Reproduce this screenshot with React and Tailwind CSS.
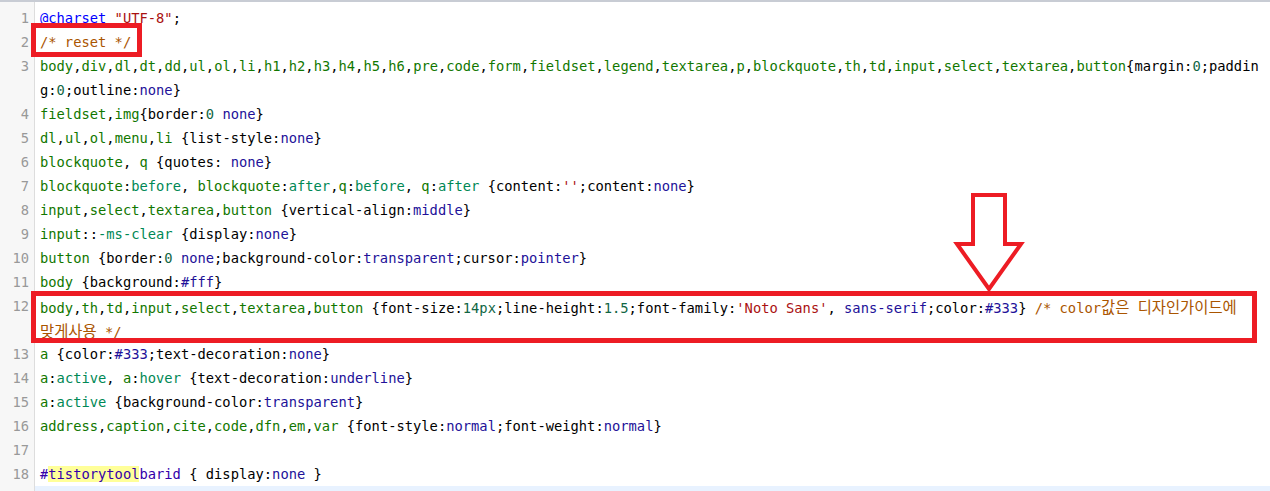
import React from 'react';

const tone = {
  p: 'text-black',
  t: 'text-[#117700]',
  a: 'text-[#221199]',
  n: 'text-[#116644]',
  s: 'text-[#aa1111]',
  c: 'text-[#aa5500]',
  v: 'text-[#008855]',
  d: 'text-[#0000ff]',
  b: 'text-[#3300aa]',
  h: 'text-[#3300aa] bg-[#ffff99]',
  k: "text-[#aa5500] text-[15.4px] font-['Noto_Sans_CJK_KR',sans-serif]",
};

// selector list -> tag tokens with plain commas
function sel(list) {
  const out = [];
  list.split(',').forEach((tag, i) => {
    if (i > 0) out.push(['p', ',']);
    out.push(['t', tag]);
  });
  return out;
}

const lines = [
  { rows: [[['d', '@charset'], ['p', ' '], ['s', '"UTF-8"'], ['p', ';']]] },
  { rows: [[['c', '/* reset */']]] },
  {
    rows: [
      [
        ...sel('body,div,dl,dt,dd,ul,ol,li,h1,h2,h3,h4,h5,h6,pre,code,form,fieldset,legend,textarea,p,blockquote,th,td,input,select,textarea,button'),
        ['p', '{margin:'], ['n', '0'], ['p', ';paddin'],
      ],
      [['p', 'g:'], ['n', '0'], ['p', ';outline:'], ['a', 'none'], ['p', '}']],
    ],
  },
  { rows: [[...sel('fieldset,img'), ['p', '{border:'], ['n', '0'], ['p', ' '], ['a', 'none'], ['p', '}']]] },
  { rows: [[...sel('dl,ul,ol,menu,li'), ['p', ' {list-style:'], ['a', 'none'], ['p', '}']]] },
  { rows: [[['t', 'blockquote'], ['p', ', '], ['t', 'q'], ['p', ' {quotes: '], ['a', 'none'], ['p', '}']]] },
  {
    rows: [[
      ['t', 'blockquote'], ['p', ':'], ['v', 'before'], ['p', ', '],
      ['t', 'blockquote'], ['p', ':'], ['v', 'after'], ['p', ','],
      ['t', 'q'], ['p', ':'], ['v', 'before'], ['p', ', '],
      ['t', 'q'], ['p', ':'], ['v', 'after'],
      ['p', ' {content:'], ['s', "''"], ['p', ';content:'], ['a', 'none'], ['p', '}'],
    ]],
  },
  { rows: [[...sel('input,select,textarea,button'), ['p', ' {vertical-align:'], ['a', 'middle'], ['p', '}']]] },
  { rows: [[['t', 'input'], ['p', '::'], ['v', '-ms-clear'], ['p', ' {display:'], ['a', 'none'], ['p', '}']]] },
  {
    rows: [[
      ['t', 'button'], ['p', ' {border:'], ['n', '0'], ['p', ' '], ['a', 'none'],
      ['p', ';background-color:'], ['a', 'transparent'], ['p', ';cursor:'], ['a', 'pointer'], ['p', '}'],
    ]],
  },
  { rows: [[['t', 'body'], ['p', ' {background:'], ['a', '#fff'], ['p', '}']]] },
  {
    rows: [
      [
        ...sel('body,th,td,input,select,textarea,button'),
        ['p', ' {font-size:'], ['n', '14px'], ['p', ';line-height:'], ['n', '1.5'],
        ['p', ';font-family:'], ['s', "'Noto Sans'"], ['p', ', '], ['a', 'sans-serif'],
        ['p', ';color:'], ['a', '#333'], ['p', '} '],
        ['c', '/* color'], ['k', '값은'], ['c', ' '], ['k', '디자인가이드에'],
      ],
      [['k', '맞게사용'], ['c', ' */']],
    ],
  },
  { rows: [[['t', 'a'], ['p', ' {color:'], ['a', '#333'], ['p', ';text-decoration:'], ['a', 'none'], ['p', '}']]] },
  {
    rows: [[
      ['t', 'a'], ['p', ':'], ['v', 'active'], ['p', ', '], ['t', 'a'], ['p', ':'], ['v', 'hover'],
      ['p', ' {text-decoration:'], ['a', 'underline'], ['p', '}'],
    ]],
  },
  { rows: [[['t', 'a'], ['p', ':'], ['v', 'active'], ['p', ' {background-color:'], ['a', 'transparent'], ['p', '}']]] },
  {
    rows: [[
      ...sel('address,caption,cite,code,dfn,em,var'),
      ['p', ' {font-style:'], ['a', 'normal'], ['p', ';font-weight:'], ['a', 'normal'], ['p', '}'],
    ]],
  },
  { rows: [[]] },
  { rows: [[['b', '#'], ['h', 'tistorytool'], ['b', 'barid'], ['p', ' { display:'], ['a', 'none'], ['p', ' }']]] },
  { rows: [[]], active: true },
];

function App() {
  return (
    <div className="relative h-[491px] w-[1270px] overflow-hidden bg-white border-t-2 border-[#c8ccd4] font-['DejaVu_Sans_Mono','Noto_Sans_CJK_KR',monospace] text-[13.78px] leading-[24px]">
      <div className="flex min-h-full">
        {/* gutter */}
        <div className="w-[35px] shrink-0 bg-[#f7f7f7] border-r border-[#dddddd] pt-[4px] text-[#999999]">
          {lines.map((line, i) => (
            <div key={i} className="pr-[5px] text-right" style={{ height: 24 * line.rows.length }}>
              {line.active ? '' : i + 1}
            </div>
          ))}
        </div>

        {/* code */}
        <div className="flex-1 pt-[4px]">
          {lines.map((line, i) =>
            line.rows.map((row, j) => (
              <div
                key={i + '-' + j}
                className={'h-[24px] pl-[5px] whitespace-pre ' + (line.active ? 'bg-[#e8f2ff]' : '')}
              >
                {row.map(([k, text], n) => (
                  <span key={n} className={tone[k]}>{text}</span>
                ))}
              </div>
            ))
          )}
        </div>
      </div>

      {/* red annotations */}
      <div className="absolute left-[31px] top-[21px] h-[34px] w-[111px] border-[5px] border-[#ed1c24]" />
      <div className="absolute left-[31px] top-[289px] h-[52px] w-[1226px] border-[5px] border-[#ed1c24]" />
      <svg className="absolute left-0 top-0 pointer-events-none" width="1270" height="491">
        <polygon
          points="973,193 1005,193 1005,242 1021,242 989,287 957,242 973,242"
          fill="none"
          stroke="#ed1c24"
          strokeWidth="4"
          strokeLinejoin="miter"
        />
      </svg>
    </div>
  );
}

export default App;
